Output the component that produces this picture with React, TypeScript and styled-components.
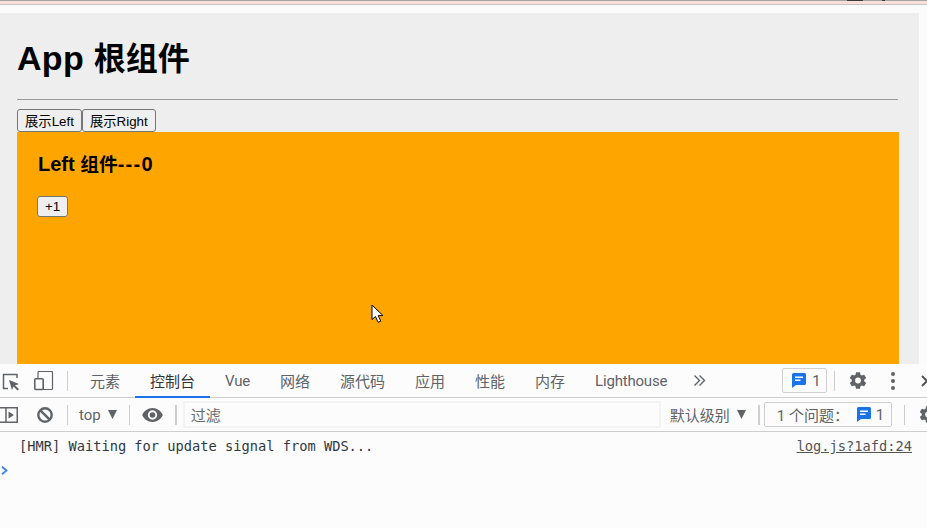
import React from "react";
import styled, { createGlobalStyle } from "styled-components";

const Global = createGlobalStyle`
  html, body { margin: 0; padding: 0; width: 927px; height: 528px; overflow: hidden; background: #fcfcfc; }
`;
const Screen = styled.div`
  position: relative; width: 927px; height: 528px; overflow: hidden; display: flex; flex-direction: column;
  font-family: "Liberation Sans", "Noto Sans CJK SC", sans-serif; color: #000;
`;
const TopStrip = styled.div`
  position: relative; height: 5px; flex: none; box-sizing: border-box; background: #f9dfdc;
  border-top: 1px solid #a8a2a2; border-bottom: 1px solid #c4c4c4;
`;
const TopMark = styled.span<{ $l: number; $w: number }>`
  position: absolute; top: -1px; left: ${p => p.$l}px; width: ${p => p.$w}px; height: 1px; background: #3a3a3a;
`;
const Viewport = styled.div`
  height: 359px; flex: none; padding: 8px 8px 0 0; box-sizing: border-box; background: #fbfbfb; overflow: hidden;
`;
const AppBox = styled.div`
  background: #eeeeee; height: 351px; padding: 0 21px 0 17px; box-sizing: border-box; overflow: hidden;
`;
const Title = styled.h1`
  margin: 0; padding-top: 23px; height: 86px; box-sizing: border-box; font-size: 32px; line-height: 44px; font-weight: 700;
`;
const Latin = styled.span<{ $size: number; $s?: number }>`
  font-size: ${p => p.$size}px; letter-spacing: ${p => p.$s ?? 0}px;
`;
const Rule = styled.hr`
  margin: 0 0 9px; border: 0; border-top: 1px solid #9a9a9a; height: 0;
`;
const ButtonRow = styled.div`
  display: flex; height: 23px;
`;
const PageButton = styled.button`
  height: 23px; padding: 0 7px; box-sizing: border-box; background: #efefef; border: 1px solid #767676; border-radius: 3px;
  font-family: "Liberation Sans", "Noto Sans CJK SC", sans-serif; font-size: 13.33px; color: #000; white-space: nowrap;
`;
const LeftPanel = styled.div`
  background: #ffa500; height: 300px; margin-right: -1px; padding: 19px 20px 0; box-sizing: border-box;
`;
const PanelTitle = styled.h3`
  margin: 0 0 18px; padding-left: 1px; font-size: 18.72px; line-height: 26px; font-weight: 700;
`;
const PlusButton = styled(PageButton)`
  height: 21px; padding: 0 7px; display: block;
`;
const DevTools = styled.div`
  flex: 1; display: flex; flex-direction: column; background: #fcfcfc; overflow: hidden;
  font-family: Roboto, "Noto Sans CJK SC", sans-serif; color: #5f6368;
`;
const TabBar = styled.div`
  height: 34px; flex: none; box-sizing: border-box; border-bottom: 1px solid #cfcfcf; display: flex; align-items: center;
`;
const IconSlot = styled.span<{ $w: number; $l?: number }>`
  flex: none; width: ${p => p.$w}px; margin-left: ${p => p.$l ?? 0}px; display: flex; align-items: center; justify-content: center; height: 100%;
`;
const Sep = styled.span<{ $l?: number; $r?: number; $w?: number; $h?: number }>`
  flex: none; width: ${p => p.$w ?? 1}px; height: ${p => p.$h ?? 20}px; background: #cfcfcf;
  margin-left: ${p => p.$l ?? 0}px; margin-right: ${p => p.$r ?? 0}px;
`;
const Tab = styled.div<{ $active?: boolean; $latin?: boolean }>`
  height: 33px; padding: ${p => (p.$latin ? "2px" : "0")} 15px 0; margin-bottom: -1px; display: flex; align-items: center; box-sizing: border-box; white-space: nowrap;
  font-size: 15px; letter-spacing: ${p => (p.$latin ? "-0.2px" : "0")}; color: ${p => (p.$active ? "#333" : "#5f6368")};
  border-bottom: 2px solid ${p => (p.$active ? "#1a73e8" : "transparent")};
`;
const Badge = styled.div`
  display: flex; align-items: center; box-sizing: border-box; flex: none;
  border: 1px solid #d0d0d0; border-radius: 2px; font-size: 15px; color: #5f6368; white-space: nowrap;
`;
const TabBadge = styled(Badge)`
  width: 45px; height: 25px; margin-left: 76px; padding-left: 9px; gap: 6px;
`;
const Toolbar = styled.div`
  height: 34px; flex: none; box-sizing: border-box; border-bottom: 1px solid #cfcfcf; display: flex; align-items: center;
`;
const ToolText = styled.span<{ $l?: number }>`
  font-size: 15px; white-space: nowrap; color: #5f6368; flex: none; margin-left: ${p => p.$l ?? 0}px;
`;
const Filter = styled.div`
  width: 478px; height: 27px; flex: none; box-sizing: border-box; border: 2px solid #f3f3f3; display: flex; align-items: center;
  padding-left: 6px; font-size: 15px; color: #6a6a6a; background: #fcfcfc;
`;
const IssueBadge = styled(Badge)`
  width: 128px; height: 25px; padding-left: 12px;
`;
const IssueLabel = styled.span`
  width: 80px; flex: none;
`;
const IssueCount = styled.span`
  margin-left: 5px;
`;
const Log = styled.div`
  padding: 6px 15px 0 19px; height: 20px; display: flex; justify-content: space-between;
  font-family: "DejaVu Sans Mono", monospace; font-size: 13.7px; line-height: 17px; color: #303942;
`;
const LogLink = styled.span`
  color: #555; text-decoration: underline;
`;
const Prompt = styled.div`
  padding: 8px 0 0 1px; height: 10px; line-height: 0;
`;
const Cursor = styled.svg`
  position: absolute; left: 371px; top: 304px;
`;

const Gear = () => (
  <svg width="23" height="23" viewBox="0 0 24 24" fill="#5f6368">
    <path d="M19.43 12.98c.04-.32.07-.64.07-.98s-.03-.66-.07-.98l2.11-1.65a.5.5 0 0 0 .12-.64l-2-3.46a.5.5 0 0 0-.61-.22l-2.49 1a7.3 7.3 0 0 0-1.69-.98l-.38-2.65A.49.49 0 0 0 14 2h-4a.49.49 0 0 0-.49.42l-.38 2.65c-.61.25-1.17.59-1.69.98l-2.49-1a.5.5 0 0 0-.61.22l-2 3.46a.49.49 0 0 0 .12.64l2.11 1.65c-.04.32-.07.65-.07.98s.03.66.07.98l-2.11 1.65a.5.5 0 0 0-.12.64l2 3.46c.12.22.39.3.61.22l2.49-1c.52.4 1.08.73 1.69.98l.38 2.65c.03.24.24.42.49.42h4c.25 0 .46-.18.49-.42l.38-2.65c.61-.25 1.17-.59 1.69-.98l2.49 1c.23.09.49 0 .61-.22l2-3.46a.5.5 0 0 0-.12-.64zM12 15.500a3.500 3.500 0 1 1 0-7 3.500 3.500 0 0 1 0 7z" />
  </svg>
);
const Msg = () => (
  <svg width="14" height="15" viewBox="0 0 14 15" style={{ flex: "none" }}>
    <path d="M1.500 0h11A1.500 1.500 0 0 1 14 1.500v9a1.500 1.500 0 0 1-1.500 1.500H4l-4 3V1.500A1.500 1.500 0 0 1 1.500 0z" fill="#1a73e8" />
    <path d="M3 3.500h8v1.500H3zM3 6.500h5.500v1.500H3z" fill="#fff" />
  </svg>
);
const Arrow = () => (
  <svg width="9" height="9" viewBox="0 0 9 9"><path d="M0 0h9L4.500 9z" fill="#5f6368" /></svg>
);

export default function App() {
  return (
    <Screen>
      <Global />
      <TopStrip>
        <TopMark $l={847} $w={16} />
        <TopMark $l={882} $w={3} />
      </TopStrip>
      <Viewport>
        <AppBox>
          <Title><Latin $size={34} $s={0.3}>App </Latin>根组件</Title>
          <Rule />
          <ButtonRow>
            <PageButton>展示Left</PageButton>
            <PageButton>展示Right</PageButton>
          </ButtonRow>
          <LeftPanel>
            <PanelTitle><Latin $size={20}>Left </Latin>组件<Latin $size={20} $s={1.3}>---0</Latin></PanelTitle>
            <PlusButton>+1</PlusButton>
          </LeftPanel>
        </AppBox>
      </Viewport>
      <DevTools>
        <TabBar>
          <IconSlot $w={20}>
            <svg width="20" height="20" viewBox="0 0 20 20" fill="none">
              <path d="M8 17.500H3.500v-14H17V7" stroke="#5f6368" strokeWidth="1.500" />
              <path d="M9 9l10 4-4 1.500 4 3.500-1.500 1.500-4-4L12 19z" fill="#5f6368" />
            </svg>
          </IconSlot>
          <IconSlot $w={20} $l={14}>
            <svg width="20" height="20" viewBox="0 0 20 20" fill="none" stroke="#5f6368">
              <rect x="4" y="0.500" width="14.500" height="18" rx="1" strokeWidth="1.200" />
              <rect x="0.800" y="7.800" width="8.400" height="10.700" rx="1" fill="#fcfcfc" strokeWidth="1.600" />
            </svg>
          </IconSlot>
          <Sep $l={13} $r={7} />
          <Tab>元素</Tab>
          <Tab $active>控制台</Tab>
          <Tab $latin>Vue</Tab>
          <Tab>网络</Tab>
          <Tab>源代码</Tab>
          <Tab>应用</Tab>
          <Tab>性能</Tab>
          <Tab>内存</Tab>
          <Tab $latin>Lighthouse</Tab>
          <IconSlot $w={13} $l={11}>
            <svg width="13" height="13" viewBox="0 0 13 13" fill="none" stroke="#5f6368" strokeWidth="1.400">
              <path d="M1.500 1.500l5 5-5 5M6.500 1.500l5 5-5 5" />
            </svg>
          </IconSlot>
          <TabBadge><Msg />1</TabBadge>
          <Sep $l={7} $r={13} />
          <IconSlot $w={20}><Gear /></IconSlot>
          <IconSlot $w={50}>
            <svg width="6" height="20" viewBox="0 0 6 20" fill="#5f6368">
              <circle cx="3" cy="3" r="2" /><circle cx="3" cy="10" r="2" /><circle cx="3" cy="17" r="2" />
            </svg>
          </IconSlot>
          <IconSlot $w={12} $l={3}>
            <svg width="12" height="12" viewBox="0 0 12 12" stroke="#555" strokeWidth="2">
              <path d="M1 1l10 10M11 1L1 11" />
            </svg>
          </IconSlot>
        </TabBar>
        <Toolbar>
          <IconSlot $w={18}>
            <svg width="18" height="16" viewBox="0 0 18 16" fill="none" stroke="#5f6368" strokeWidth="1.500">
              <rect x="-2" y="0.750" width="19.250" height="14.500" />
              <path d="M6 1v14" />
              <path d="M8.500 4.500l5.500 3.500-5.500 3.500z" fill="#5f6368" stroke="none" />
            </svg>
          </IconSlot>
          <IconSlot $w={16} $l={19}>
            <svg width="16" height="16" viewBox="0 0 16 16" fill="none" stroke="#5f6368" strokeWidth="2.400">
              <circle cx="8" cy="8" r="6.700" />
              <path d="M3.300 3.300l9.400 9.400" />
            </svg>
          </IconSlot>
          <Sep $l={14} $r={11} />
          <ToolText>top</ToolText>
          <IconSlot $w={10} $l={7}><Arrow /></IconSlot>
          <Sep $l={11} $r={12} />
          <IconSlot $w={21}>
            <svg width="21" height="14" viewBox="0 0 22 15" fill="#5f6368">
              <path d="M11 0C6 0 1.800 3.100 0 7.500 1.800 11.900 6 15 11 15s9.200-3.100 11-7.500C20.200 3.100 16 0 11 0zm0 12.500a5 5 0 1 1 0-10 5 5 0 0 1 0 10zM11 4.500a3 3 0 1 0 0 6 3 3 0 0 0 0-6z" />
            </svg>
          </IconSlot>
          <Sep $l={12} $r={6} $w={2} />
          <Filter>过滤</Filter>
          <ToolText $l={9}>默认级别</ToolText>
          <IconSlot $w={9} $l={7}><Arrow /></IconSlot>
          <Sep $l={12} $r={4} $w={2} />
          <IssueBadge><IssueLabel>1 个问题：</IssueLabel><Msg /><IssueCount>1</IssueCount></IssueBadge>
          <Sep $l={12} $r={13} />
          <IconSlot $w={20}><Gear /></IconSlot>
        </Toolbar>
        <Log>
          <span>[HMR] Waiting for update signal from WDS...</span>
          <LogLink>log.js?1afd:24</LogLink>
        </Log>
        <Prompt>
          <svg width="7" height="9" viewBox="0 0 7 9" fill="none" stroke="#3b82f0" strokeWidth="1.800">
            <path d="M1 .7l4.500 3.800L1 8.300" />
          </svg>
        </Prompt>
      </DevTools>
      <Cursor width="14" height="20" viewBox="0 0 14 20">
        <path d="M1 1v14.500l3.500-3 2.600 5.800 2.700-1.200-2.600-5.500H12z" fill="#fff" stroke="#000" strokeWidth="1" />
      </Cursor>
    </Screen>
  );
}
